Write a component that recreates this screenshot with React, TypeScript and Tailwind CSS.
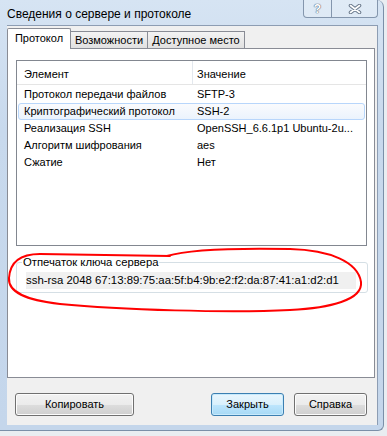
const rows = [
  { name: 'Протокол передачи файлов', value: 'SFTP-3' },
  { name: 'Криптографический протокол', value: 'SSH-2', selected: true },
  { name: 'Реализация SSH', value: 'OpenSSH_6.6.1p1 Ubuntu-2u...' },
  { name: 'Алгоритм шифрования', value: 'aes' },
  { name: 'Сжатие', value: 'Нет' },
];

function Button({ label, primary }: { label: string; primary?: boolean }) {
  return (
    <div
      className={
        primary
          ? 'h-full flex items-center justify-center rounded-[3px] border border-[#3c7fb1] bg-[linear-gradient(#eaf6fd,#d9f0fc_50%,#bee6fd_50%,#a7d9f5)] shadow-[inset_0_0_0_1px_#c8eafc]'
          : 'h-full flex items-center justify-center rounded-[3px] border border-[#707070] bg-[linear-gradient(#f2f2f2,#ebebeb_50%,#dddddd_50%,#cfcfcf)] shadow-[inset_0_0_0_1px_#fcfcfc]'
      }
    >
      {label}
    </div>
  );
}

export default function App() {
  return (
    <div className="relative w-[387px] h-[436px] overflow-hidden bg-[#e9edf1] font-['Liberation_Sans',Arial,sans-serif] text-[11px] text-black">
      {/* window frame */}
      <div className="w-[384px] h-[431px] flex flex-col rounded-tr-[7px] rounded-br-[6px] border-r border-b border-[#7b8fa8] bg-[linear-gradient(180deg,#d6e4f3,#c8d9ed_30%,#c4d6eb)]">
        {/* title bar */}
        <div className="h-[25px] shrink-0 flex items-start">
          <div className="pl-[7px] pt-[6px] text-[12px] leading-[16px]">Сведения о сервере и протоколе</div>
          <div className="ml-auto mr-[5px] flex h-[18px] rounded-b-[4px] border border-t-0 border-[#8496ad] bg-white/25">
            <div className="w-[27px] flex items-center justify-center text-[12px] font-bold leading-none text-white [text-shadow:0_0_1px_#5f6e80,0_0_1px_#5f6e80,0_0_1px_#5f6e80]">
              ?
            </div>
            <div className="w-[46px] flex items-center justify-center border-l border-[#8496ad]">
              <svg width="14" height="10" viewBox="0 0 14 10">
                <path d="M2.5 1.5 L11.5 8.5 M11.5 1.5 L2.5 8.5" stroke="#6b7a8c" strokeWidth="3.6" strokeLinecap="round" />
                <path d="M2.5 1.5 L11.5 8.5 M11.5 1.5 L2.5 8.5" stroke="#ffffff" strokeWidth="1.6" strokeLinecap="round" />
              </svg>
            </div>
          </div>
        </div>

        {/* client area */}
        <div className="ml-[7px] w-[371px] h-[400px] flex flex-col border-t border-r border-[#8d9db3] bg-[#f0f0f0]">
          {/* tabs */}
          <div className="mt-[2px] h-[20px] flex items-end">
            <div className="relative z-10 -mb-px w-[64px] h-[21px] flex items-center justify-center pb-[2px] rounded-t-[2px] border border-b-0 border-[#898c95] bg-white">
              Протокол
            </div>
            <div className="w-[77px] h-[17px] flex items-center justify-center pt-[1px] border-t border-r border-[#898c95] bg-[linear-gradient(#f3f3f3,#e1e1e1)]">
              Возможности
            </div>
            <div className="w-[97px] h-[17px] flex items-center justify-center pt-[1px] border-t border-r border-[#898c95] bg-[linear-gradient(#f3f3f3,#e1e1e1)]">
              Доступное место
            </div>
          </div>

          {/* tab panel */}
          <div className="w-[368px] h-[330px] shrink-0 border border-[#898c95] bg-white">
            {/* list view */}
            <div className="ml-[8px] mt-[11px] w-[351px] h-[186px] border border-[#828790] bg-white">
              <div className="h-[24px] flex border-b border-[#e5e5e5]">
                <div className="w-[176px] pl-[7px] pt-[3px] flex items-center border-r border-[#e3e8ee]">Элемент</div>
                <div className="pl-[4px] pt-[3px] flex items-center">Значение</div>
              </div>
              <div className="mt-[1px]">
                {rows.map((r) => (
                  <div
                    key={r.name}
                    className={
                      r.selected
                        ? 'ml-[1px] w-[347px] h-[17px] flex items-center rounded-[3px] border border-[#b8d6fb] bg-[linear-gradient(#fafbfd,#ebf3fd)]'
                        : 'ml-[1px] w-[347px] h-[17px] flex items-center border border-transparent'
                    }
                  >
                    <div className="w-[178px] pl-[5px] whitespace-nowrap">{r.name}</div>
                    <div className="whitespace-nowrap">{r.value}</div>
                  </div>
                ))}
              </div>
            </div>

            {/* group box */}
            <div className="relative ml-[8px] mt-[16px] w-[352px] h-[31px] rounded-[3px] border border-[#d5dfe5]">
              <div className="absolute left-[5px] top-[-8px] px-[1px] text-[11.3px] leading-[14px] bg-white">Отпечаток ключа сервера</div>
              <div className="ml-[9px] mt-[9px] w-[330px] h-[17px] text-[11.4px] leading-[17px] bg-[#f0f0f0] whitespace-nowrap">
                ssh-rsa 2048 67:13:89:75:aa:5f:b4:9b:e2:f2:da:87:41:a1:d2:d1
              </div>
            </div>
          </div>

          {/* buttons */}
          <div className="mt-[15px] h-[23px] flex">
            <div className="ml-[8px] w-[119px]">
              <Button label="Копировать" />
            </div>
            <div className="ml-[77px] w-[73px]">
              <Button label="Закрыть" primary />
            </div>
            <div className="ml-[10px] w-[73px]">
              <Button label="Справка" />
            </div>
          </div>
        </div>
      </div>

      {/* red hand-drawn annotation */}
      <svg className="absolute inset-0 pointer-events-none" width="387" height="436" viewBox="0 0 387 436">
        <path
          d="M 167 256 C 190 249, 240 248, 290 249 C 330 250, 358 262, 361 282 C 363 300, 330 308, 290 310 C 230 313, 120 310, 60 304 C 25 300, 8 292, 9 278 C 10 262, 20 254, 40 254 L 170 256"
          fill="none"
          stroke="#ff0000"
          strokeWidth="2"
          strokeLinecap="round"
          strokeLinejoin="round"
        />
      </svg>
    </div>
  );
}
